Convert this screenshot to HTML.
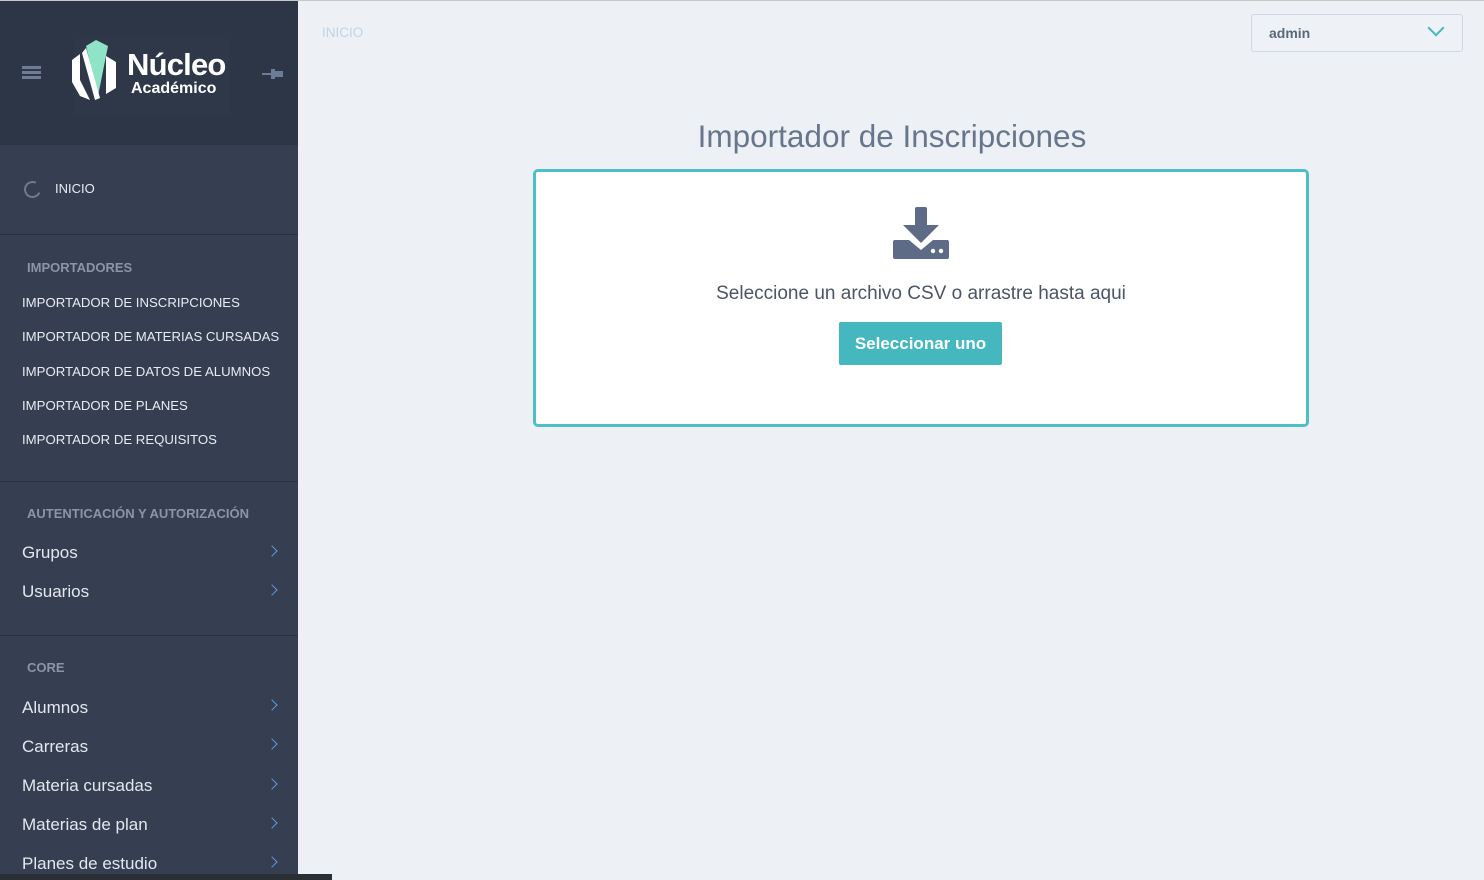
<!DOCTYPE html>
<html><head><meta charset="utf-8"><style>
*{margin:0;padding:0;box-sizing:border-box}
body{width:1484px;height:880px;overflow:hidden;background:#edf1f5;font-family:"Liberation Sans",sans-serif;position:relative}
.top{position:absolute;left:0;top:0;width:1484px;height:1px;background:#c8c8c8}
.sb{position:absolute;left:0;top:1px;width:298px;height:879px;background:#353f51}
.hd{position:absolute;left:0;top:0;width:298px;height:144px;background:#2c3646}
.sep{position:absolute;left:0;width:298px;height:1px;background:#2a3241}
.t{position:absolute;color:#fff}
.sec{position:absolute;left:27px;font-size:13px;color:#8a95a8;font-weight:bold}
.imp{position:absolute;left:22px;font-size:13.2px;color:#e8ecf2}
.it{position:absolute;left:22px;font-size:17px;color:#e3e8ef}
.ch{position:absolute;left:268px;width:8px;height:8px;border-right:1.6px solid #5b9be6;border-top:1.6px solid #5b9be6;transform:rotate(45deg)}
</style></head><body>
<div class="top"></div>
<div class="sb">
<div class="hd">
 <div style="position:absolute;left:22px;top:65px;width:19px;height:3px;background:#6c7c96;box-shadow:0 5px 0 #6c7c96,0 10px 0 #6c7c96"></div>
 <div style="position:absolute;left:73px;top:38px;width:157px;height:76px;background:#2f3849"></div>
 <svg style="position:absolute;left:72px;top:39px" width="48" height="62" viewBox="0 0 48 62">
  <polygon points="14,6 24,0 36,6 26,56" fill="#8fe3c6"/>
  <polygon points="0,20 8,14 8,40 18,60 8,56 0,42" fill="#fff"/>
  <polygon points="10,13 14,8 28,58 23,60" fill="#fff"/>
  <polygon points="34,16 44,22 44,48 34,54" fill="#fff"/>
 </svg>
 <div class="t" style="left:127px;top:46px;font-size:31px;font-weight:bold;letter-spacing:-0.8px">Núcleo</div>
 <div class="t" style="left:131px;top:79px;font-size:16px;font-weight:bold">Académico</div>
 <svg style="position:absolute;left:262px;top:66px" width="22" height="14" viewBox="0 0 22 14"><path d="M0 7H10" stroke="#6c7c96" stroke-width="2"/><path d="M9 2h4v10h-4zM13 4h8v6h-8z" fill="#6c7c96"/></svg>
</div>
<div style="position:absolute;left:24px;top:180px;width:17px;height:17px;border-radius:50%;border:2.5px solid #6c7c96;border-right-color:transparent;transform:rotate(-20deg)"></div>
<div class="t" style="left:55px;top:180px;font-size:13px;color:#e8ecf2">INICIO</div>
<div class="sep" style="top:233px"></div>
<div class="sec" style="top:259px">IMPORTADORES</div>
<div class="imp" style="top:294px">IMPORTADOR DE INSCRIPCIONES</div>
<div class="imp" style="top:328px">IMPORTADOR DE MATERIAS CURSADAS</div>
<div class="imp" style="top:363px">IMPORTADOR DE DATOS DE ALUMNOS</div>
<div class="imp" style="top:397px">IMPORTADOR DE PLANES</div>
<div class="imp" style="top:431px">IMPORTADOR DE REQUISITOS</div>
<div class="sep" style="top:480px"></div>
<div class="sec" style="top:505px">AUTENTICACIÓN Y AUTORIZACIÓN</div>
<div class="it" style="top:542px">Grupos</div><div class="ch" style="top:546px"></div>
<div class="it" style="top:581px">Usuarios</div><div class="ch" style="top:585px"></div>
<div class="sep" style="top:634px"></div>
<div class="sec" style="top:659px">CORE</div>
<div class="it" style="top:697px">Alumnos</div><div class="ch" style="top:700px"></div>
<div class="it" style="top:736px">Carreras</div><div class="ch" style="top:739px"></div>
<div class="it" style="top:775px">Materia cursadas</div><div class="ch" style="top:779px"></div>
<div class="it" style="top:814px">Materias de plan</div><div class="ch" style="top:818px"></div>
<div class="it" style="top:853px">Planes de estudio</div><div class="ch" style="top:857px"></div>
</div>
<div style="position:absolute;left:0;top:874px;width:332px;height:6px;background:#2a2f36"></div>
<div style="position:absolute;left:322px;top:25px;font-size:13.5px;color:#bfd3e6">INICIO</div>
<div style="position:absolute;left:1251px;top:14px;width:212px;height:38px;border:1px solid #cfd8e2;border-radius:3px;background:#eef2f6">
 <div style="position:absolute;left:17px;top:10px;font-size:14px;font-weight:bold;color:#5b6878">admin</div>
 <div style="position:absolute;left:178px;top:7px;width:12px;height:12px;border-right:2px solid #45b7bf;border-bottom:2px solid #45b7bf;transform:rotate(45deg)"></div>
</div>
<div style="position:absolute;left:534px;top:118px;width:716px;text-align:center;font-size:31.5px;color:#67768c">Importador de Inscripciones</div>
<div style="position:absolute;left:533px;top:169px;width:776px;height:258px;border:3px solid #4dbfc7;border-radius:5px;background:#fff">
 <svg style="position:absolute;left:357px;top:33px" width="58" height="54" viewBox="0 0 58 54">
  <rect x="22" y="2" width="12" height="20" rx="2" fill="#5d6b86"/>
  <polygon points="10,20 46,20 28,38" fill="#5d6b86"/>
  <path d="M2 35h14l12 10l12-10h14a2 2 0 0 1 2 2v15a2 2 0 0 1-2 2h-52a2 2 0 0 1-2-2v-15a2 2 0 0 1 2-2z" fill="#5d6b86"/>
  <circle cx="40" cy="46" r="2.2" fill="#fff"/><circle cx="48" cy="46" r="2.2" fill="#fff"/>
 </svg>
 <div style="position:absolute;left:0;top:111px;width:770px;text-align:center;font-size:19px;color:#4b5565">Seleccione un archivo CSV o arrastre hasta aqui</div>
 <div style="position:absolute;left:303px;top:150px;width:163px;height:43px;background:#45b7bf;border-radius:2px;color:#fff;font-size:17px;font-weight:bold;text-align:center;line-height:43px">Seleccionar uno</div>
</div>
</body></html>
